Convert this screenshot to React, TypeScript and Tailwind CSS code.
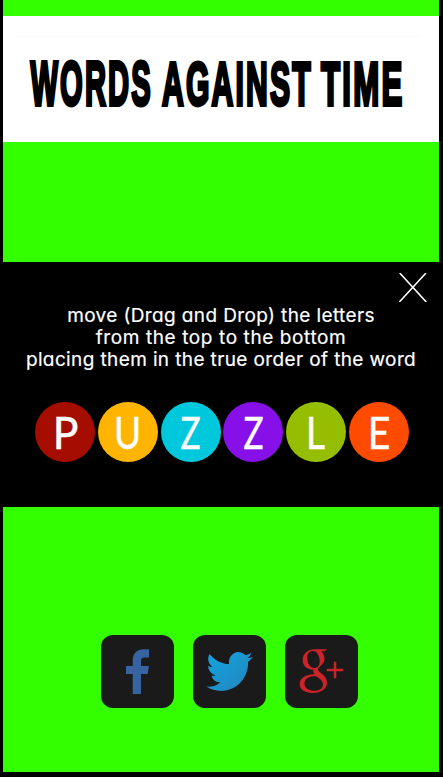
const letters = [
  { char: "P", color: "bg-[#a50d00]", shape: "translate-x-px scale-x-95" },
  { char: "U", color: "bg-[#ffb400]", shape: "scale-x-[0.82]" },
  { char: "Z", color: "bg-[#00c8dc]", shape: "scale-x-[0.74]" },
  { char: "Z", color: "bg-[#8710e8]", shape: "scale-x-[0.74]" },
  { char: "L", color: "bg-[#96be00]", shape: "-translate-x-px scale-x-[0.82]" },
  { char: "E", color: "bg-[#ff4b00]", shape: "scale-x-[0.87]" },
];

function Wordmark() {
  return (
    <svg
      viewBox="0 0 436 105"
      className="h-[105px] w-full fill-black stroke-black font-['Liberation_Sans',Arial,sans-serif] text-[62px] font-bold tracking-[4.5px]"
      strokeWidth="3.8"
    >
      <text transform="translate(27.5 67.6) scale(.47 1)">WORDS</text>
      <text transform="translate(159 67.6) scale(.486 1)">AGAINST</text>
      <text transform="translate(318 67.6) scale(.503 1)">TIME</text>
    </svg>
  );
}

function FacebookIcon() {
  return (
    <svg viewBox="0 0 73 73" className="size-full">
      <path
        fill="#3764a0"
        d="M48 14.2v8.2h-4.2c-2.7 0-3.8 1.2-3.8 3.8V31h8l-1.4 8H40v20h-8.3V39H25v-8h6.7v-5.5c0-7.3 4.3-11.3 11.3-11.3z"
      />
    </svg>
  );
}

function TwitterIcon() {
  return (
    <svg viewBox="0 0 73 73" className="size-full">
      <defs>
        <linearGradient id="bird" x1="0" y1="0" x2="1" y2="1">
          <stop offset="0" stopColor="#12a5e0" />
          <stop offset="1" stopColor="#2583bd" />
        </linearGradient>
      </defs>
      <path
        fill="url(#bird)"
        transform="translate(13.3 12.6) scale(1.94 1.99)"
        d="M23.953 4.57a10 10 0 01-2.825.775 4.958 4.958 0 002.163-2.723c-.951.555-2.005.959-3.127 1.184a4.92 4.92 0 00-8.384 4.482C7.69 8.095 4.067 6.13 1.64 3.162a4.822 4.822 0 00-.666 2.475c0 1.71.87 3.213 2.188 4.096a4.904 4.904 0 01-2.228-.616v.06a4.923 4.923 0 003.946 4.827 4.996 4.996 0 01-2.212.085 4.936 4.936 0 004.604 3.417 9.867 9.867 0 01-6.102 2.105c-.39 0-.779-.023-1.17-.067a13.995 13.995 0 007.557 2.209c9.053 0 13.998-7.496 13.998-13.985 0-.21 0-.42-.015-.63A9.935 9.935 0 0024 4.59z"
      />
    </svg>
  );
}

function GooglePlusIcon() {
  return (
    <svg viewBox="0 0 73 73" className="size-full">
      <g fill="#cd2328" fillRule="evenodd">
        <path d="M42.3 14.3H29.5c-6.5 0-11.8 4.5-11.8 10.6 0 6 4.5 9.8 11 9.8-.6 1-.8 2.4.8 4.5-9 0-14.8 4-14.8 9.8 0 5.3 5 9 12.8 9 9 0 14.5-4.5 14.5-10.2 0-4-2-6.5-5.5-9.2-2.5-2-3.5-2.8-3.5-4 0-1.3 1-2.2 2.5-3.5 2.8-2.3 4-4.4 4-7.3 0-3-1.3-5.7-3.5-7.5h3.500zM28 16c4 0 6.700 5 6.700 10 0 4.500-2 7-5.400 7-4.300 0-7-4.800-7-10 0-4.500 2.200-7 5.700-7zM30.500 41c4.500 3 7.500 5 7.500 8.500s-3 6.300-8.500 6.300c-6 0-10-3-10-7.300 0-4.700 4.500-7.500 11-7.500z" />
        <path d="M48.8 26.7h2.5v7h7v2.500h-7v7h-2.500v-7h-7v-2.500h7z" />
      </g>
    </svg>
  );
}

export default function App() {
  return (
    <div className="h-[777px] w-[443px] overflow-hidden bg-black pr-1 pb-[5px] pl-[3px]">
      <main className="flex h-full flex-col bg-[#33ff00] pt-4">
        <header className="h-[126px] bg-white pt-5">
          <div className="mr-[19px] ml-[11px] h-px bg-[#fafafa]" />
          <Wordmark />
        </header>

        {/* How to play */}
        <section className="mt-[120px] h-[245px] bg-black text-white">
          <div className="flex h-[43px] justify-end pt-[11px] pr-3">
            <svg viewBox="0 0 28 29" className="h-[29px] w-7" stroke="white" strokeWidth="1.6">
              <path d="M.7 0 27.3 29M27 0 .3 29" />
            </svg>
          </div>
          <div className="text-center font-['Inter',sans-serif] text-[19px] leading-[22px] tracking-[0.38px] whitespace-nowrap [-webkit-text-stroke:0.2px_white] [font-feature-settings:'cv11','ss03']">
            <p>move (Drag and Drop) the letters</p>
            <p className="tracking-[0.6px]">from the top to the bottom</p>
            <p>placing them in the true order of the word</p>
          </div>
          <div className="mt-[31px] flex gap-[2.9px] pl-[31.8px]">
            {letters.map((letter, i) => (
              <span
                key={i}
                className={`flex size-[60px] items-center justify-center rounded-full font-['Lato',sans-serif] text-[45px] leading-none [-webkit-text-stroke:0.5px_white] ${letter.color}`}
              >
                <span className={`inline-block ${letter.shape}`}>{letter.char}</span>
              </span>
            ))}
          </div>
        </section>

        {/* Share buttons */}
        <nav className="mt-32 flex gap-[19px] pl-[98px]">
          <a className="size-[73px] rounded-xl bg-[#1a1a1a]"><FacebookIcon /></a>
          <a className="size-[73px] rounded-xl bg-[#1a1a1a]"><TwitterIcon /></a>
          <a className="size-[73px] rounded-xl bg-[#1a1a1a]"><GooglePlusIcon /></a>
        </nav>
      </main>
    </div>
  );
}
